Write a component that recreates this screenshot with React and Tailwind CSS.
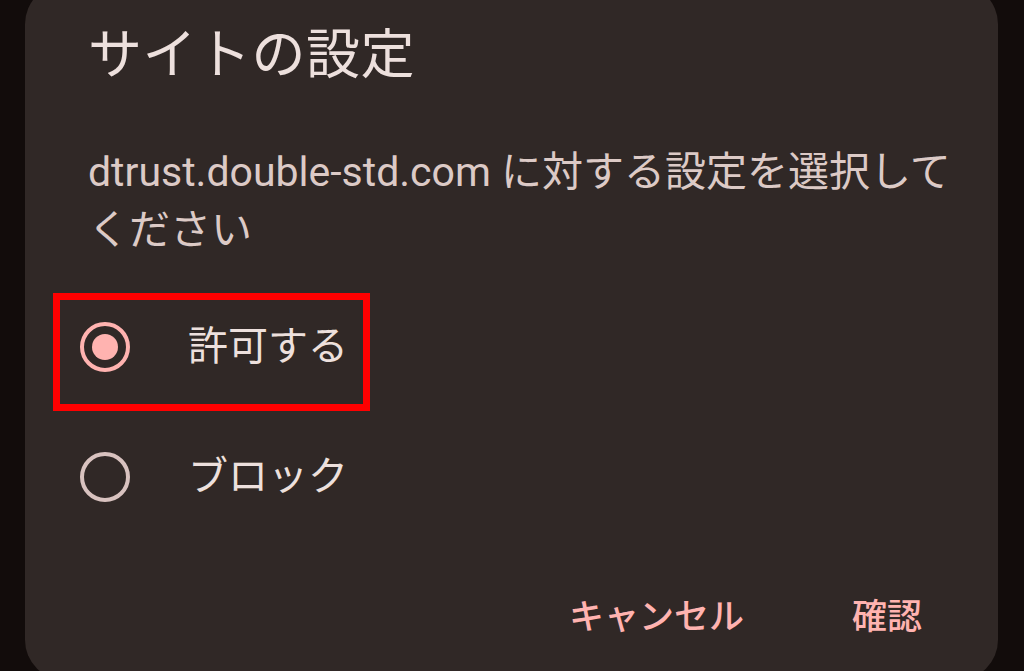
import React from "react";

const font = { fontFamily: '"Roboto", "Noto Sans CJK JP", sans-serif' };

function Radio({ checked }) {
  return (
    <div
      className={
        "w-[50px] h-[50px] rounded-full border-[4px] flex items-center justify-center shrink-0 " +
        (checked ? "border-[#ffb3b0]" : "border-[#d8c2bf]")
      }
    >
      {checked && <div className="w-[26px] h-[26px] rounded-full bg-[#ffb3b0]" />}
    </div>
  );
}

export default function App() {
  return (
    <div
      className="w-[1024px] h-[671px] bg-[#120c0b] overflow-hidden pl-[25px] pr-[26px]"
      style={font}
    >
      <div className="relative mt-[-16px] h-[696px] rounded-[40px] bg-[#302826] pl-[63px] pr-[20px] pt-[41px] flex flex-col text-[#ede0dd]">
        <h1 className="text-[54px] leading-[62px] font-normal tracking-[0.5px]">サイトの設定</h1>
        <p className="mt-[56px] text-[41px] leading-[58px] text-[#dccac6] whitespace-nowrap">
          dtrust.double-std.com に対する設定を選択して
          <br />
          ください
        </p>
        <div className="mt-[43px] flex flex-col">
          <div className="flex items-center h-[90px] -ml-[8px]">
            <Radio checked />
            <span className="ml-[58px] text-[40px] text-[#ede0dd]">許可する</span>
          </div>
          <div className="flex items-center h-[90px] mt-[40px] -ml-[8px]">
            <Radio />
            <span className="ml-[58px] text-[40px] text-[#ede0dd]">ブロック</span>
          </div>
        </div>
        <div className="mt-[70px] flex justify-end items-center pr-[56px] gap-[108px] text-[#ffb3b0] text-[35px] font-medium">
          <span>キャンセル</span>
          <span>確認</span>
        </div>
        <div className="absolute left-[28px] top-[309px] w-[317px] h-[118px] border-[7px] border-[#ff0000] pointer-events-none" />
      </div>
    </div>
  );
}
